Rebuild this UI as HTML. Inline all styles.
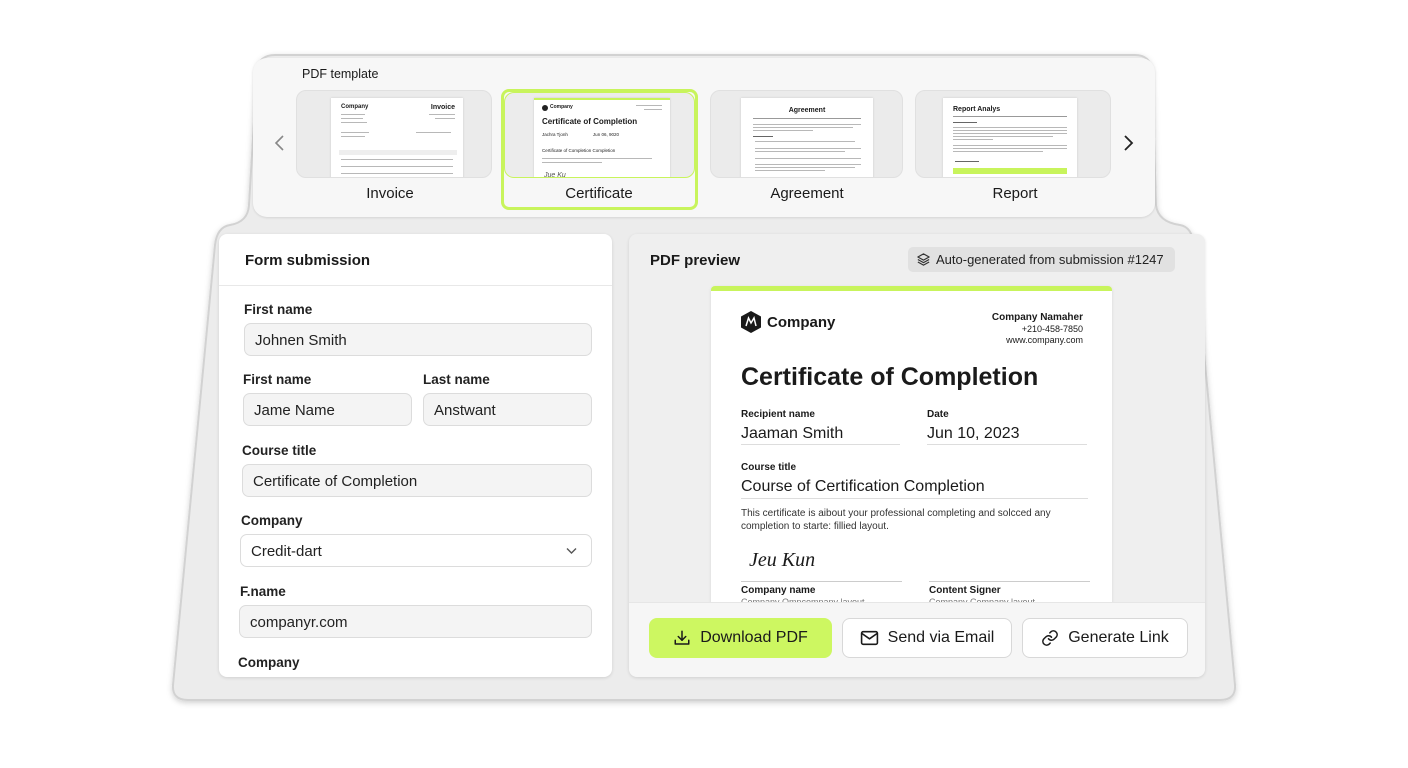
<!DOCTYPE html>
<html><head><meta charset="utf-8"><style>
*{box-sizing:border-box;margin:0;padding:0}
body{width:1408px;height:768px;background:#fff;font-family:"Liberation Sans",sans-serif;color:#1a1a1a;position:relative;overflow:hidden}
.a{position:absolute}
.t{position:absolute;white-space:nowrap}
.card{position:absolute;top:90px;height:88px;background:#ebebeb;border:1px solid #e0e0e0;border-radius:10px;overflow:hidden}
.paper{position:absolute;background:#fff;top:7px;width:134px;height:90px;box-shadow:0 0 2px rgba(0,0,0,.15)}
.ln{position:absolute;height:1.5px;background:#b8b8b8}
.lbl{position:absolute;top:185px;font-size:15px;text-align:center;width:196px}
.fl{position:absolute;font-size:13.5px;font-weight:bold;color:#222}
.in{position:absolute;height:33px;background:#f4f4f4;border:1px solid #dcdcdc;border-radius:7px;font-size:15px;padding:8px 10px 6px;color:#222}
.btn{position:absolute;top:618px;height:40px;border-radius:8px;font-size:16px;display:flex;align-items:center;justify-content:center;gap:9px;color:#1a1a1a}
.pl{font-size:10px;font-weight:bold}
</style></head><body>
<svg class="a" style="left:0;top:0" width="1408" height="768">
<defs><filter id="sh" x="-5%" y="-5%" width="110%" height="115%"><feDropShadow dx="0" dy="2" stdDeviation="3" flood-color="#000" flood-opacity=".18"/></filter></defs>
<path filter="url(#sh)" d="M275 55 H1135 Q1150 55 1152 70 L1156 205 Q1158 222 1180 225 Q1192 227 1194 245 L1235 685 Q1236 700 1220 700 H188 Q172 700 173 685 L215 245 Q217 227 230 225 Q248 222 249 205 L257 70 Q259 55 275 55 Z" fill="#ececec" stroke="#d2d2d2" stroke-width="2"/>
</svg>
<!-- top panel -->
<div class="a" style="left:253px;top:58px;width:902px;height:159px;background:#f7f7f7;border-radius:14px;box-shadow:0 1px 2px rgba(0,0,0,.1)"></div>
<div class="t" style="left:302px;top:67px;font-size:12.5px">PDF template</div>
<svg class="a" style="left:274px;top:135px" width="12" height="16"><path d="M9 1 L2 8 L9 15" fill="none" stroke="#888" stroke-width="1.6"/></svg>
<svg class="a" style="left:1122px;top:135px" width="12" height="16"><path d="M3 1 L10 8 L3 15" fill="none" stroke="#222" stroke-width="1.8"/></svg>

<div class="card" style="left:296px;width:196px"><div class="paper" style="left:34px;width:132px">
<div class="t" style="left:10px;top:6px;font-size:6px;font-weight:bold">Company</div><div class="t" style="right:8px;top:6px;font-size:7px;font-weight:bold">Invoice</div>
<div class="ln" style="left:10px;top:16px;width:24px;height:1px"></div><div class="ln" style="left:10px;top:20px;width:22px;height:1px"></div><div class="ln" style="left:10px;top:24px;width:26px;height:1px"></div>
<div class="ln" style="right:8px;top:16px;width:26px;height:1px"></div><div class="ln" style="right:8px;top:20px;width:20px;height:1px"></div>
<div class="ln" style="left:10px;top:34px;width:28px;height:1px"></div><div class="ln" style="left:10px;top:38px;width:24px;height:1px"></div><div class="ln" style="left:85px;top:34px;width:35px;height:1px"></div>
<div class="a" style="left:8px;top:52px;width:118px;height:5px;background:#eee"></div>
<div class="ln" style="left:10px;top:61px;width:112px;height:1px"></div><div class="ln" style="left:10px;top:68px;width:112px;height:1px"></div><div class="ln" style="left:10px;top:75px;width:112px;height:1px"></div></div></div>
<div class="lbl" style="left:292px">Invoice</div>

<div class="a" style="left:501px;top:89px;width:197px;height:121px;border:3px solid #c8f45c;border-radius:8px"></div>
<div class="card" style="left:504px;top:92px;width:191px;height:86px;background:#ececec;border-color:#c8f45c"><div class="paper" style="left:29px;top:5px;width:136px;border-top:2px solid #c8f45c">
<div class="a" style="left:8px;top:5px;width:6px;height:6px;background:#222;border-radius:50%"></div><div class="t" style="left:16px;top:4px;font-size:5px;font-weight:bold">Company</div>
<div class="ln" style="right:8px;top:5px;width:26px;height:1px"></div><div class="ln" style="right:8px;top:9px;width:18px;height:1px"></div>
<div class="t" style="left:8px;top:17px;font-size:8px;font-weight:bold">Certificate of Completion</div>
<div class="t" style="left:8px;top:32px;font-size:4.5px">Jachra Tjonh&nbsp;&nbsp;&nbsp;&nbsp;&nbsp;&nbsp;&nbsp;&nbsp;&nbsp;&nbsp;&nbsp;&nbsp;&nbsp;&nbsp;&nbsp;&nbsp;&nbsp;&nbsp;&nbsp;&nbsp;Jun 06, 9020</div>
<div class="t" style="left:8px;top:48px;font-size:4.5px">Certificate of Completion Completion</div>
<div class="ln" style="left:8px;top:58px;width:110px;height:1px"></div><div class="ln" style="left:8px;top:62px;width:60px;height:1px"></div>
<div class="t" style="left:10px;top:72px;font-size:7px;font-style:italic;color:#555">Jue Ku</div></div></div>
<div class="lbl" style="left:501px">Certificate</div>

<div class="card" style="left:710px;width:193px"><div class="paper" style="left:30px;width:132px">
<div class="t" style="left:0;width:132px;text-align:center;top:9px;font-size:7px;font-weight:bold">Agreement</div>
<div class="ln" style="left:12px;top:20px;width:108px;height:1px;background:#999"></div>
<div class="ln" style="left:12px;top:26px;width:108px;height:1px"></div><div class="ln" style="left:12px;top:29px;width:100px;height:1px"></div><div class="ln" style="left:12px;top:32px;width:60px;height:1px"></div>
<div class="ln" style="left:12px;top:38px;width:20px;height:1px;background:#666"></div>
<div class="ln" style="left:14px;top:43px;width:100px;height:1px"></div><div class="ln" style="left:14px;top:50px;width:106px;height:1px"></div><div class="ln" style="left:14px;top:53px;width:90px;height:1px"></div><div class="ln" style="left:14px;top:60px;width:106px;height:1px"></div><div class="ln" style="left:14px;top:66px;width:106px;height:1px"></div><div class="ln" style="left:14px;top:69px;width:100px;height:1px"></div><div class="ln" style="left:14px;top:72px;width:70px;height:1px"></div></div></div>
<div class="lbl" style="left:709px">Agreement</div>

<div class="card" style="left:915px;width:196px"><div class="paper" style="left:27px;width:134px">
<div class="t" style="left:10px;top:8px;font-size:7px;font-weight:bold">Report Analys</div>
<div class="ln" style="left:10px;top:18px;width:114px;height:1px;background:#999"></div>
<div class="ln" style="left:10px;top:24px;width:24px;height:1px;background:#666"></div>
<div class="ln" style="left:10px;top:29px;width:114px;height:1px"></div><div class="ln" style="left:10px;top:32px;width:114px;height:1px"></div><div class="ln" style="left:10px;top:35px;width:114px;height:1px"></div><div class="ln" style="left:10px;top:38px;width:100px;height:1px"></div><div class="ln" style="left:10px;top:41px;width:40px;height:1px"></div>
<div class="ln" style="left:10px;top:47px;width:114px;height:1px"></div><div class="ln" style="left:10px;top:50px;width:114px;height:1px"></div><div class="ln" style="left:10px;top:53px;width:90px;height:1px"></div>
<div class="ln" style="left:12px;top:63px;width:24px;height:1px;background:#666"></div>
<div class="a" style="left:10px;top:70px;width:114px;height:6px;background:#c8f45c"></div></div></div>
<div class="lbl" style="left:917px">Report</div>

<!-- form panel -->
<div class="a" style="left:219px;top:234px;width:393px;height:443px;background:#fff;border-radius:8px;box-shadow:0 1px 3px rgba(0,0,0,.12)"></div>
<div class="t" style="left:245px;top:252px;font-size:15px;font-weight:bold">Form submission</div>
<div class="a" style="left:219px;top:285px;width:393px;height:1px;background:#e8e8e8"></div>
<div class="fl" style="left:244px;top:302px">First name</div>
<div class="in" style="left:244px;top:323px;width:348px">Johnen Smith</div>
<div class="fl" style="left:243px;top:372px">First name</div><div class="fl" style="left:423px;top:372px">Last name</div>
<div class="in" style="left:243px;top:393px;width:169px">Jame Name</div>
<div class="in" style="left:423px;top:393px;width:169px">Anstwant</div>
<div class="fl" style="left:242px;top:443px">Course title</div>
<div class="in" style="left:242px;top:464px;width:350px">Certificate of Completion</div>
<div class="fl" style="left:241px;top:513px">Company</div>
<div class="in" style="left:240px;top:534px;width:352px;background:#fff">Credit-dart<svg class="a" style="right:14px;top:12px" width="11" height="8"><path d="M1 1.5 L5.5 6 L10 1.5" fill="none" stroke="#555" stroke-width="1.4"/></svg></div>
<div class="fl" style="left:240px;top:584px">F.name</div>
<div class="in" style="left:239px;top:605px;width:353px">companyr.com</div>
<div class="fl" style="left:238px;top:655px">Company</div>

<!-- preview panel -->
<div class="a" style="left:629px;top:234px;width:576px;height:443px;background:#efefef;border-radius:8px;box-shadow:0 1px 3px rgba(0,0,0,.12);overflow:hidden">
<div class="t" style="left:21px;top:18px;font-size:15px;font-weight:bold">PDF preview</div>
<div class="a" style="left:279px;top:13px;width:267px;height:25px;background:#e1e1e1;border-radius:5px"></div>
<svg class="a" style="left:287px;top:18px" width="15" height="15" viewBox="0 0 24 24" fill="none" stroke="#333" stroke-width="2" stroke-linejoin="round"><path d="M12 3 L21 8 L12 13 L3 8 Z"/><path d="M3 12 L12 17 L21 12"/><path d="M3 16 L12 21 L21 16"/></svg>
<div class="t" style="left:307px;top:18px;font-size:13px;color:#222">Auto-generated from submission #1247</div>
<div class="a" style="left:82px;top:52px;width:401px;height:330px;background:#fff;border-top:5px solid #c8f45c;border-radius:4px 4px 0 0;box-shadow:0 1px 3px rgba(0,0,0,.1)">
<svg class="a" style="left:29px;top:19px" width="22" height="24" viewBox="0 0 22 24"><path d="M11 1 L21 6.5 V17.5 L11 23 L1 17.5 V6.5 Z" fill="#1a1a1a"/><path d="M6 16 L8.5 8 L11 13 L14 8 L16 16" fill="none" stroke="#fff" stroke-width="1.5"/></svg>
<div class="t" style="left:56px;top:23px;font-size:15px;font-weight:bold">Company</div>
<div class="t" style="right:29px;top:21px;font-size:10px;font-weight:bold">Company Namaher</div>
<div class="t" style="right:29px;top:33px;font-size:9px">+210-458-7850</div>
<div class="t" style="right:29px;top:44px;font-size:9px">www.company.com</div>
<div class="t" style="left:30px;top:72px;font-size:25px;font-weight:bold">Certificate of Completion</div>
<div class="t pl" style="left:30px;top:118px">Recipient name</div><div class="t pl" style="left:216px;top:118px">Date</div>
<div class="t" style="left:30px;top:134px;font-size:16px">Jaaman Smith</div><div class="t" style="left:216px;top:134px;font-size:16px">Jun 10, 2023</div>
<div class="a" style="left:30px;top:153px;width:159px;height:1px;background:#ddd"></div><div class="a" style="left:216px;top:153px;width:160px;height:1px;background:#ddd"></div>
<div class="t pl" style="left:30px;top:171px">Course title</div>
<div class="t" style="left:30px;top:187px;font-size:16px">Course of Certification Completion</div>
<div class="a" style="left:30px;top:207px;width:347px;height:1px;background:#ddd"></div>
<div class="a" style="left:30px;top:217px;font-size:10px;line-height:12.5px;width:330px;color:#333">This certificate is aibout your professional completing and solcced any completion to starte: fillied layout.</div>
<div class="t" style="left:38px;top:258px;font-size:20px;font-style:italic;font-family:'Liberation Serif',serif">Jeu Kun</div>
<div class="a" style="left:30px;top:290px;width:161px;height:1px;background:#ccc"></div><div class="a" style="left:218px;top:290px;width:161px;height:1px;background:#ccc"></div>
<div class="t pl" style="left:30px;top:294px">Company name</div><div class="t pl" style="left:218px;top:294px">Content Signer</div>
<div class="t" style="left:30px;top:306px;font-size:9px;color:#777">Company Ompcompany layout</div><div class="t" style="left:218px;top:306px;font-size:9px;color:#777">Company Company layout</div>
</div>
<div class="a" style="left:0;top:368px;width:576px;height:75px;background:#f6f6f6;border-top:1px solid #e6e6e6"></div>
</div>
<div class="btn" style="left:649px;width:183px;background:#cdf761"><svg width="18" height="18" viewBox="0 0 24 24" fill="none" stroke="#1a1a1a" stroke-width="2" stroke-linecap="round" stroke-linejoin="round"><path d="M12 3 V15"/><path d="M7 10 L12 15 L17 10"/><path d="M3 15 V20 H21 V15"/></svg>Download PDF</div>
<div class="btn" style="left:842px;width:170px;background:#fff;border:1px solid #d8d8d8"><svg width="19" height="16" viewBox="0 0 24 20" fill="none" stroke="#1a1a1a" stroke-width="2" stroke-linejoin="round"><rect x="2" y="2" width="20" height="16" rx="2"/><path d="M2 4 L12 11 L22 4"/></svg>Send via Email</div>
<div class="btn" style="left:1022px;width:166px;background:#fff;border:1px solid #d8d8d8"><svg width="18" height="18" viewBox="0 0 24 24" fill="none" stroke="#1a1a1a" stroke-width="2" stroke-linecap="round"><path d="M10 13a5 5 0 0 0 7.5.5l3-3a5 5 0 0 0-7-7l-1.7 1.7"/><path d="M14 11a5 5 0 0 0-7.5-.5l-3 3a5 5 0 0 0 7 7l1.7-1.7"/></svg>Generate Link</div>
</body></html>
